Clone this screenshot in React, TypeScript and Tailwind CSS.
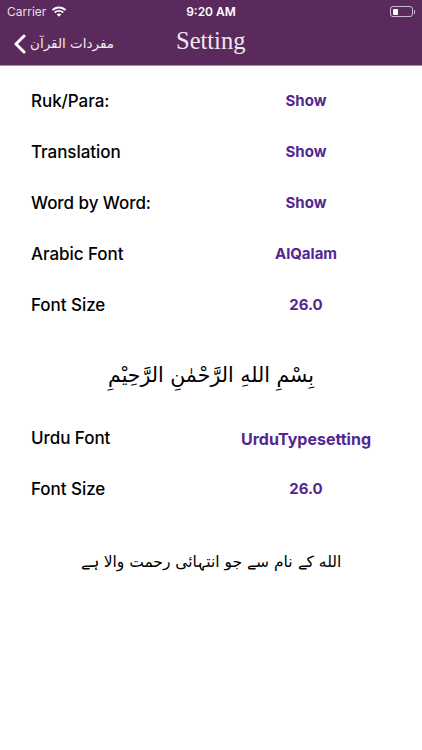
const labelFont = "font-['Inter','Liberation_Sans',sans-serif]";

function Row({ label, value, wide }: { label: string; value: string; wide?: boolean }) {
  return (
    <div className="flex h-[51px] items-center pl-[31px]">
      <span className={`w-[200px] text-[17px] font-medium tracking-[-0.05px] text-black ${labelFont}`}>{label}</span>
      <span className={`w-[150px] text-center font-bold text-[#54268f] ${wide ? "text-[16px]" : "text-[15px]"} ${labelFont}`}>{value}</span>
    </div>
  );
}

function Wifi() {
  return (
    <svg width="16" height="12" viewBox="0 0 16 12" fill="#fff">
      <path d="M8 2.4c2.3 0 4.4.9 6 2.4l1.2-1.3C13.300 1.700 10.800.6 8 .6S2.700 1.700.8 3.500L2 4.800c1.600-1.500 3.700-2.400 6-2.400z" />
      <path d="M8 5.800c1.400 0 2.600.5 3.600 1.400l1.200-1.300C11.500 4.700 9.800 4 8 4s-3.500.7-4.800 1.900l1.200 1.300c1-.9 2.200-1.400 3.600-1.400z" />
      <path d="M8 7.400c-.9 0-1.700.3-2.300.9L8 10.800l2.300-2.500c-.6-.6-1.400-.9-2.300-.9z" />
    </svg>
  );
}

export default function App() {
  return (
    <div className="h-[750px] w-[422px] overflow-hidden bg-white">
      {/* nav bar with status bar */}
      <div className="h-[66px] border-b border-[#a98aa9] bg-[#5b2a5c] text-white">
        <div className={`flex h-[22px] items-center justify-between pl-[7px] pr-[7px] pt-[1px] text-[12px] ${labelFont}`}>
          <div className="flex w-[140px] items-center gap-[5px] text-[#e8dfe8]">
            <span>Carrier</span>
            <Wifi />
          </div>
          <span className="font-semibold">9:20 AM</span>
          <div className="flex w-[140px] items-center justify-end">
            <div className="flex h-[11px] w-[23px] items-center rounded-[3px] border border-[#cdbccd] p-[1.5px]">
              <div className="h-full w-[5px] rounded-[1px] bg-white" />
            </div>
            <div className="ml-[1px] h-[4px] w-[1px] bg-[#cdbccd]" />
          </div>
        </div>
        <div className="flex h-[43px] items-center">
          <div className="flex w-[176px] items-center pl-[14px]">
            <svg width="12" height="20" viewBox="0 0 12 20" fill="none" stroke="#fff" strokeWidth="3" strokeLinecap="round" strokeLinejoin="round">
              <path d="M10 2 2 10l8 8" />
            </svg>
            <span className="ml-[4px] text-[13.5px] font-['DejaVu_Sans',serif] text-[#f1eaf1]" dir="rtl">مفردات القرآن</span>
          </div>
          <span className="mb-[4px] text-[24.5px] text-[#efe7ef] font-['Liberation_Serif',serif]">Setting</span>
        </div>
      </div>

      <div className="pt-[10px]">
        <Row label="Ruk/Para:" value="Show" />
        <Row label="Translation" value="Show" />
        <Row label="Word by Word:" value="Show" />
        <Row label="Arabic Font" value="AlQalam" />
        <Row label="Font Size" value="26.0" />
      </div>

      <div className="flex h-[82px] items-center justify-center pt-[6px] text-[20.5px] text-black font-['DejaVu_Sans',serif]" dir="rtl">
        بِسْمِ اللهِ الرَّحْمٰنِ الرَّحِيْمِ
      </div>

      <div>
        <Row label="Urdu Font" value="UrduTypesetting" wide />
        <Row label="Font Size" value="26.0" />
      </div>

      <div className="flex h-[94px] items-center justify-center pt-[2px] text-[15.5px] text-black font-['DejaVu_Sans',serif]" dir="rtl">
        الله کے نام سے جو انتہائی رحمت والا ہے
      </div>
    </div>
  );
}
